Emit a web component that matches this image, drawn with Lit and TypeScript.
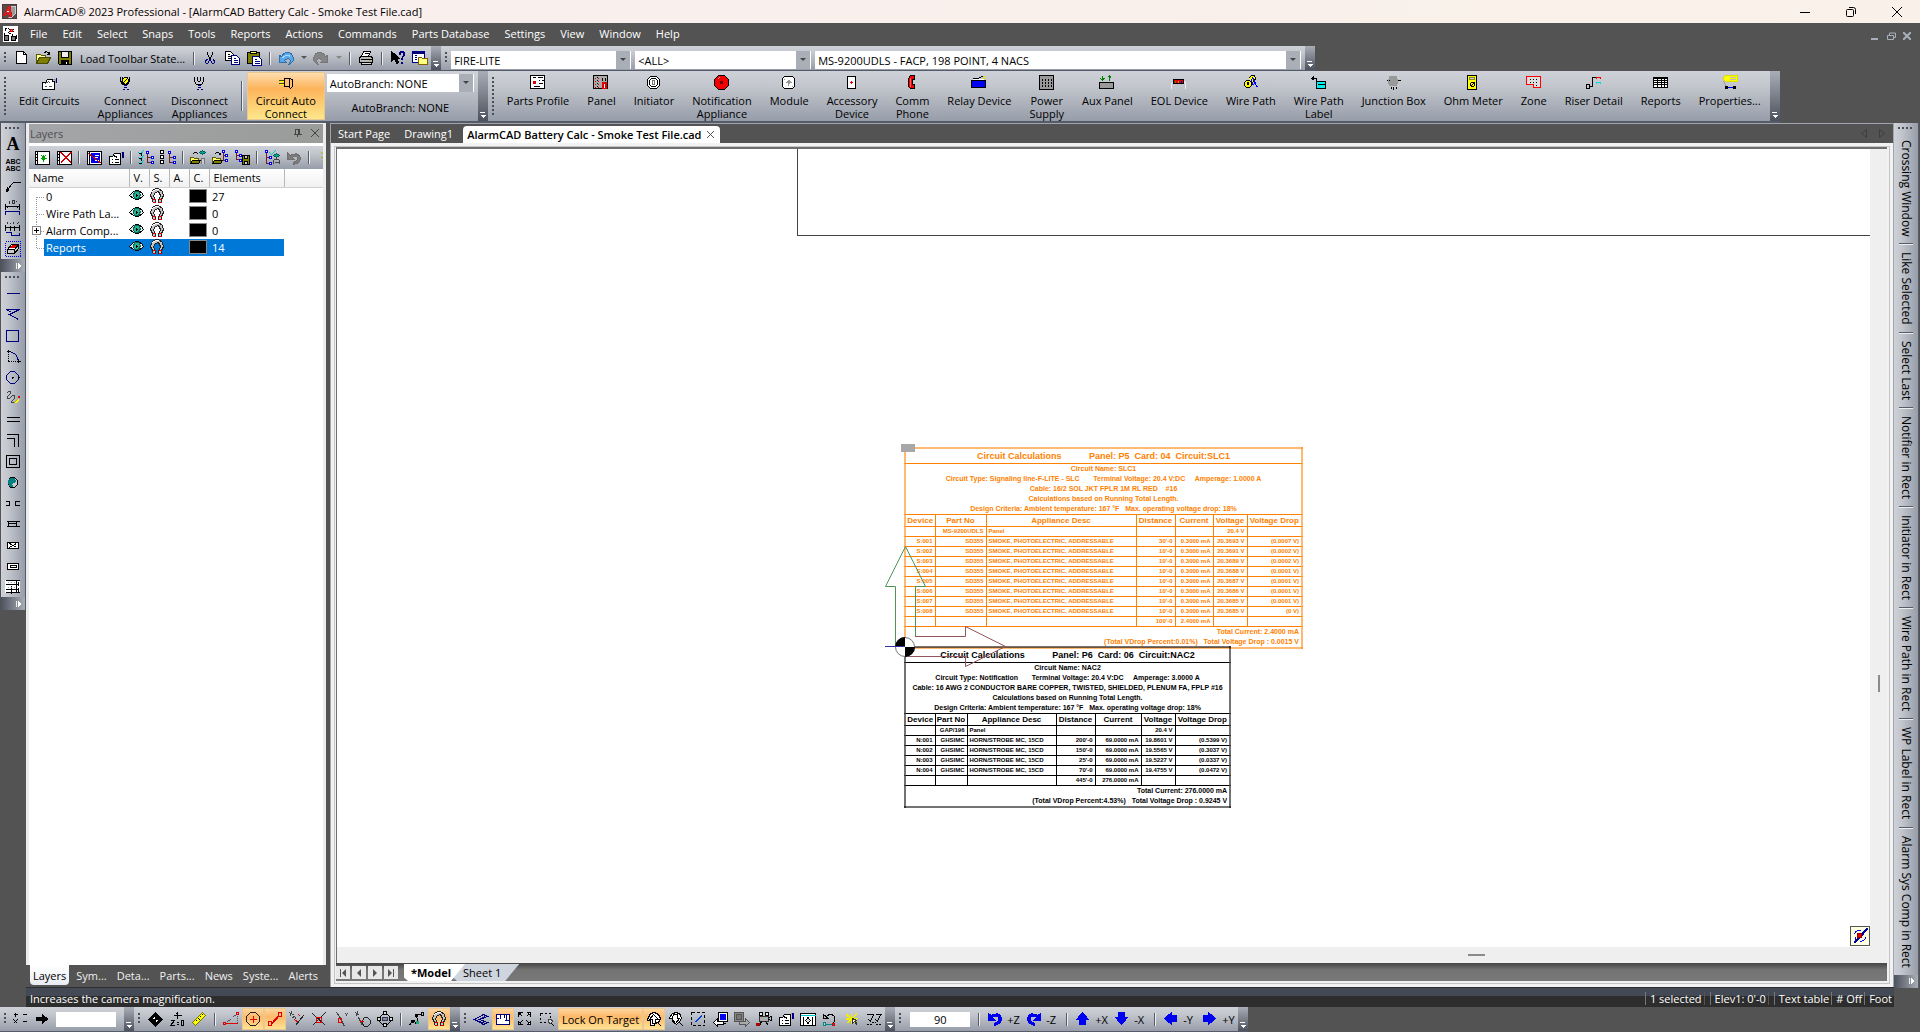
import { LitElement, html, css, svg, nothing } from "lit";
import { customElement, property } from "lit/decorators.js";
import { classMap } from "lit/directives/class-map.js";

type Shape = [d: string, stroke?: string, fill?: string, dash?: string];

const K = "#000";
const W = "#fff";
const N = "#00007f";
const B = "#0000f0";
const R = "#e00000";
const G = "#9a9a9a";
const Y = "#ffff00";

/* Icons on a 16 by 16 grid; whole numbers are pixel centres. */
const ICONS: Record<string, Shape[]> = {
  app: [["M0 0H14V14H0Z", "#4a3a3a", "#5a4a4a"], ["M8 2H13V9L9 13H6", "#ccc", "#999"], ["M1 11L6 2H8L9 12H7L6 9H4L3 11Z", "#d01818", "#e02020"], ["M4 7H6", W]],
  doc: [["M0 0H14V15H0Z", W, W], ["M1 2H3M2 1V4M5 2L11 6M11 2L5 6M1 6V8", K], ["M7 3H9V5H7Z", R, "#f66"], ["M1 9H5V14H1ZM8 10H12V14H8Z", K, "#777"], ["M5 7H7M9 7V9M13 8V12", K]],
  new: [["M3 1H10L13 4V13H3Z", K, W], ["M10 1V4H13", K]],
  open: [["M1 13V4H5L6 5H10V7", "#5a5a00", "#ffff9a"], ["M1 13L4 7H15L12 13Z", "#4a4a00", "#808000"], ["M9 2Q12 0 14 4M14 1V4H11", K]],
  save: [["M1 1H14V14H2L1 13Z", K, "#808000"], ["M4 1H11V7H4Z", K, "#eee"], ["M4 10H11V14H4Z", K, K], ["M9 11V13", W, W]],
  cut: [["M5 1V4L8 9M10 1V4L7 9", K], ["M5 9Q3 9 3 12Q4 14 6 12L7 9M10 9Q12 9 12 12Q11 14 9 12L8 9", N]],
  copy: [["M1 1H6L9 4V10H1Z", K, W], ["M3 4H5M3 6H7M3 8H6", K], ["M7 5H12L15 8V14H7Z", N, W], ["M9 8H11M9 10H13M9 12H13", N]],
  paste: [["M1 2H13V13H1Z", K, "#808000"], ["M4 3V1H10V3H4", K, "#ffff70"], ["M6 6H12L15 9V15H6Z", N, W], ["M8 9H10M8 11H13M8 13H13", N]],
  undo: [["M1 5V12H8L6 10Q9 7 11 9Q13 11 10 14Q15 12 15 8Q14 2 9 2Q5 2 3 6Z", "#2f6fae", "#5aa8e8"], ["M3 8Q8 3 12 6", "#a8d8ff"]],
  redo: [["M14 5V12H7L9 10Q6 7 4 9Q2 11 5 14Q0 12 0 8Q1 2 6 2Q10 2 12 6Z", "#777", "#858585"]],
  print: [["M5 1H12L10 6H3Z", K, W], ["M2 6H13L14 8V12H1V8Z", K, "#b8b8b8"], ["M3 12H13V14H3Z", K, "#ddd"], ["M2 9H13M6 3H10", K], ["M10 10H11", "#aa0", Y]],
  help: [["M1 1V11L4 8L6 13L8 12L6 8H9Z", K, K], ["M9 4V2L10 1H13L14 2V5L11 8V9M11 11V13", N], ["M10 4V2H13V5L12 7V9M12 11V13", N]],
  win: [["M0 1H12V12H0Z", N, W], ["M0 1H12V3H0Z", N, N], ["M2 5H4M2 7H4M2 9H4", N], ["M6 7H9L10 8H15V14H6Z", "#806000", "#ffff80"]],
  edit: [["M1 7H4L6 4H11V6H13V14H1Z", K, W], ["M4 8L7 6L9 8M3 11H5M7 11H10", "#555"], ["M11 4H14M14 3V7", G], ["M15 2V7", N, N]],
  connect: [["M3 1V5L5 9H10L12 5V1", K], ["M5 1V5M10 1V5", K], ["M5 4Q8 0 11 4Q12 7 8 9Q4 7 5 4Z", K, Y], ["M6 7L10 3", K], ["M6 10H9M6 12H9M5 14H7M9 14H11", N, N]],
  disconnect: [["M3 1V6L5 9H10L12 6V1", K], ["M6 1V5Q7 7 9 5V1", K], ["M6 10H9M6 12H9M5 14H7M9 14H11", N, N]],
  plug: [["M6 3H11L14 4V11L12 13L10 11H6Z", K, "#ffc070"], ["M11 3V11", K], ["M0 5H5M0 8H5", "#4a4a00"], ["M1 6H5M1 9H5", Y]],
  profile: [["M0 0H14V13H0Z", K, W], ["M2 2H5M7 2H12M8 5H9M11 5H13M8 8H12M3 11H9", K], ["M3 6H5V8H3Z", R, R]],
  panel: [["M0 0H14V13H0Z", K, "#aaa"], ["M2 2V12M5 2V12", R, "none", "1 2"], ["M3 2H4M3 5H4M3 8H4M3 11H4M9 2V5M12 2V5", K], ["M9 7H13V13H9Z", R, R], ["M11 8V12", W]],
  initiator: [["M4 1H10L13 4V10L10 13H4L1 10V4Z", K, W], ["M5 3H9L11 5V9L9 11H5L3 9V5Z", K], ["M6 5H8V9H6Z", "#777"], ["M7 7H7.5", R]],
  horn: [["M4 0H10L14 4V10L10 14H4L0 10V4Z", K, "#f00000"], ["M6 6H8V8H6Z", "#600", "#600"], ["M3 4L5 2", "#ff9090"]],
  module: [["M3 1H11L13 3V11L11 13H3L1 11V3Z", K, W], ["M6 5H8M5 6H9M5 7H9M6 8H8M7 4V10M4 7H10", "#999"], ["M3 4V3M11 10V11", G]],
  accessory: [["M3 1H11V13H3Z", K, W], ["M7 5V8M5 6.5H8.5", R]],
  phone: [["M6 0H10V4H8V9H10V13H6L4 11V3Z", K, "#f00000"], ["M6 2V11", "#ff6060"]],
  relay: [["M0 5H14V12H0Z", K, B], ["M1 3H7L10 1H12", K], ["M11 1H14M11 3H14", "#dd0"], ["M1 4H12", W]],
  power: [["M0 0H14V14H0Z", K, "#999"], ["M3 3V12M6 3V12M9 3V12M12 3V12", K, "none", "2 1"]],
  aux: [["M0 7H14V13H0Z", K, "#999"], ["M3 0V5M1 3L3 5L5 3M10 0V5M8 2L10 0L12 2M2 3H4M9 2H11", "#008000"], ["M3 9V9.5M5 9V9.5", "#0f0"], ["M12 11V11.5", R]],
  eol: [["M0 13V8L2 6H13L14 8V13", "#eee"], ["M2 4H12V8H2Z", K, R], ["M4 5V7", "#0a0"], ["M7 5V7", "#aa0"], ["M10 5V7", B]],
  wirepath: [["M5 3L8 0H11L12 3L10 7", K, Y], ["M8 4L9 9L12 8L13 11H14", B], ["M9 2L12 8M7 6L10 9", B], ["M3 5H6L8 7V10L6 12H3L1 10V7Z", K, Y], ["M4 7H5V9H4Z", K, W]],
  wplabel: [["M0 3L2 1V4ZM2 3H5V10", K], ["M5 6H14V13H5Z", K, "#00f0f0"], ["M6 9H14", K]],
  junction: [["M3 1H10V10H3Z", "#999", "#999"], ["M0 5H3M10 5H14M5 11V13M7 11V14M10 11V13", K], ["M2 3V8M11 3V8", "#999"]],
  ohm: [["M2 0H11V14H2Z", K, Y], ["M4 2H9V4H4Z", "#883", "#ccc"], ["M6 7H8L9 8V10L8 11H6L5 10V8ZM5 11L9 7M5 13H5.5M9 13H9.5", K]],
  zone: [["M0 1H14V12H7V9H0Z", "#f00", "#ddd"], ["M3 4H12M3 7H12M9 10H12", K, "none", "1 2"]],
  riser: [["M0 9H3V13H0ZM3 11H6V2H9", K], ["M9 2H14M10 1V3M14 1V3", "#f00"], ["M9 7H14M10 6V8M14 6V8", "#0dd"]],
  reports: [["M0 2H14V12H0Z", K, W], ["M0 3H14M0 5H14M0 7H14M0 9H14M4 3V12M8 3V12M11 3V12", K]],
  props: [["M3 0H15V6H3L1 4V2Z", "#dd0", Y], ["M7 2H13M7 4H13", "#bba"], ["M3 3V3.5", "#a00"], ["M1 6L4 11", G], ["M4 12H13", B], ["M3 11H5V13H3ZM11 11H13V13H11Z", K, K]],
  leader: [["M1 13L6 6L8 4H15", K], ["M1 13L2 9M1 13L4 12", K]],
  dim: [["M0 4V10M14 4V10M0 7H14M2 6V8M12 6V8", K], ["M4 1V4M7 1H9V4H7ZM11 1V2", "#333"], ["M0 15V12H14V15", N]],
  dims: [["M0 4V10M5 5V10M9 5V10M14 4V10M0 7H14", K], ["M2 1V3M4 3H5M8 1V3M11 3H12M13 1V2", "#333"], ["M0 12H6V15H14V12", N]],
  erase: [["M0 0H15V15H0Z", B, "none", "1 1"], ["M2 8L6 3H13L9 8Z", K, W], ["M5 6L7 4H11L9 6Z", R, R], ["M2 8H9V12H2ZM9 8L13 3V7L9 12", K, "#ccc"]],
  line: [["M1 8H14", N]],
  angle: [["M1 3H14L4 8L13 13", N], ["M1 3L6 6", N]],
  rect: [["M1 3H13V14H1Z", N]],
  arc: [["M3 3Q12 4 13 13", N], ["M3 3V13H13", K, "none", "1 1"], ["M1 3H4M3 1V4M2 13H4M13 11V14M12 13H15", K]],
  circle: [["M5 2H9L13 6V10L9 14H5L1 10V6Z", N], ["M6 8H8M7 7V9M12 8H14M13 7V9", K]],
  spline: [["M1 3L3 1H5V3L2 6V8H4L7 5H9V8L6 11V12H8", "#444"], ["M8 13L12 9", "#b0b000"], ["M9 13L13 9M10 13L13 10", Y], ["M13 6H14V7H13Z", R, R]],
  dbl: [["M1 6H14M1 10H14", K]],
  dblCorner: [["M1 2H13V14M1 6H9V14", K]],
  dblRect: [["M1 2H14V14H1ZM4 5H11V11H4Z", K]],
  ball: [["M5 3H9L12 6V10L9 13H5L3 10V6Z", K, "#ccc"], ["M5 4H9L10 7L6 9L7 12H5L3 9V6Z", "#008080", "#008080"]],
  gap: [["M0 6H4V10H0M14 6H10V10H14", K]],
  wall: [["M1 5H14M1 10H14M3 5V10M11 5V10M3 7H11", K, W]],
  boxX: [["M2 5H13V11H2Z", K, W], ["M4 6L11 10M11 6L4 10M7 8H8", K]],
  boxIn: [["M2 5H13V11H2Z", K, W], ["M5 7H11V9H5Z", K]],
  grid: [["M0 1H14V13H0Z", W, W], ["M0 1H14M0 5H12M0 10H12M6 6V14M11 1V12M13 2V6M13 8V12M0 13H14", K], ["M2 3H10M2 8H10", G, "none", "1 2"]],
  layNew: [["M1 1H15V14H1Z", K, W], ["M3 1V14M1 4H2M1 7H2M1 10H2", K], ["M9 4V11M6 7.5H12M7 5L11 10M11 5L7 10", "#00a000"]],
  layDel: [["M1 1H15V14H1Z", K, W], ["M3 1V14M1 4H2M1 7H2M1 10H2", K], ["M4 2L15 13M5 2L15 12M15 2L4 13M14 2L4 12", "#d00000"]],
  layEdit: [["M1 1H15V14H1Z", K, W], ["M3 1V14", K], ["M5 3H13V12H5Z", B, B], ["M8 5H12M8 7H11M8 10H12", W], ["M2 3L15 13", "#d00000"]],
  sheet: [["M1 6H4L6 3H12V14H1Z", K, W], ["M3 9H4M6 9H10M3 12H4M6 12H10M5 5L9 7", K], ["M12 2H14", G], ["M14 1V7M15 1V7", N]],
  checksTree: [["M0 2L2 4L5 0M0 7L2 9L5 5M0 12L2 14L5 10", "#00cccc"], ["M0 3H3V5M0 8H3V10M0 13H3", K], ["M9 3V12M9 7H13M9 12H13", "#702020"], ["M8 1H10V3H8ZM13 6H15V8H13ZM13 11H15V13H13Z", B, W]],
  boxesTree: [["M0 0H3V3H0ZM0 5H3V8H0ZM0 10H3V13H0Z", K, W], ["M9 3V12M9 7H13M9 12H13", "#702020"], ["M8 1H10V3H8ZM13 6H15V8H13ZM13 11H15V13H13Z", B, W]],
  openEye: [["M0 13V7H3L4 8H8V13Z", "#5a5a00", "#ff6"], ["M0 13L2 10H10L8 13Z", K, "#808000"], ["M2 4Q5 0 8 4", K], ["M9 2L12 0L15 2L12 4Z", "#055", "#0a9"], ["M11 13V8H14V13", "#777", "#ccc"]],
  openTree: [["M0 13V7H3L4 8H8V13Z", "#5a5a00", "#ff6"], ["M0 13L2 10H10L8 13Z", K, "#808000"], ["M2 4Q5 0 8 4V2M8 4H6", K], ["M11 1V10H14M11 5H14", "#702020"], ["M10 0H12V2H10ZM13 4H15V6H13ZM13 9H15V11H13Z", B, W]],
  treeSave: [["M2 1V9H5M2 5H5", "#702020"], ["M1 0H3V2H1ZM5 4H7V6H5ZM5 9H7V11H5Z", B, W], ["M8 5H15V14H8Z", K, "#808000"], ["M10 5H13V8H10ZM10 11H13V14H10Z", K, "#ccc"]],
  treeEye: [["M2 1V13H5M2 7H5", "#702020"], ["M1 0H3V2H1ZM5 6H7V8H5ZM5 12H7V14H5Z", B, W], ["M5 2L7 4L11 0", "#0cc"], ["M9 5L12 3L15 5L12 7Z", "#055", "#0a9"], ["M9 13V10Q12 7 15 10V13M10 12H14", "#444"]],
  back: [["M1 2V9H8L6 7Q9 4 11 7Q12 10 7 12V14Q14 13 14 7Q11 1 4 5Z", "#707070", "#7c7c7c"]],
  sun: [["M8 5H13V10H8ZM4 7H6M5 2L7 4M5 12L7 10", "#aa0", Y]],
  eye: [["M0 7Q4 2 8 2Q12 3 14 7Q10 11 7 11Q3 10 0 7Z", K, "#e8e8e8"], ["M5 3H9L11 6L9 10H5L4 7Z", "#006b5b", "#30b090"], ["M7 5V8M6 6.5H8.5", K]],
  magnet: [["M3 13V11L1 7L3 2L7 0H9L13 3L14 7L12 11V14H9V11L11 8L10 4L8 3L5 5L4 8L6 11V14H3", "#222", "#c4c4c4"], ["M3 3L6 1H9", W], ["M3 11H6M9 11H12M3 14H6M9 14H12", R]],
  calc: [["M0 3H4M2 1V5M9 3H13M0 8L4 12M4 8L0 12M9 10H13M11 8V8.5M11 12V12.5", K]],
  arrowR: [["M1 6H7V3L12 7.5L7 12V9H1Z", K, K]],
  datum: [["M8 1L15 8L8 15L1 8Z", K, K], ["M5 8L8 5V8ZM8 8H11L8 11Z", W, W], ["M8 0V15M0 8H15", K]],
  zzero: [["M8 0V7M4 4H12M7 2L10 5", K], ["M1 9H5L1 14H5M7 11H9M7 13H9M12 9H14V14H12Z", K]],
  ruler: [["M1 11L11 1L14 4L4 14Z", "#777700", Y], ["M5 9L6 10M7 7L9 9M9 5L10 6M11 3L12 4", K]],
  snapAng: [["M2 12L14 2V12", "#555", "none", "1 1"], ["M1 12H14", R], ["M0 11H2V13H0ZM13 1H15V3H13Z", R, "none"]],
  snapCen: [["M5 1H10L14 5V10L10 14H5L1 10V5Z", "#222"], ["M4 7.5H11M7.5 4V11", "#e00"]],
  snapEnd: [["M4 12L12 3M4 13L13 3", R], ["M1 10H4V14H1ZM11 1H14V5H11Z", R, "#fdc080"]],
  snapPar: [["M0 1L5 4M2 0L1 5M3 6L5 5L7 8", "#444"], ["M6 14L14 4", "#222"], ["M5 8L9 11M9 3L11 5", R]],
  snapInt: [["M1 2L14 14M14 1L1 14", "#222"], ["M5 6H10V11H5Z", R]],
  snapNear: [["M3 1L6 5L11 15", "#444"], ["M5 7H8V11H5Z", R], ["M12 2L14 5M14 2L12 5", "#444"]],
  snapTan: [["M0 1L4 4M2 0L1 5M3 6L7 14", "#444"], ["M9 6H12L15 9V12L12 15H9L7 12V9Z", "#222"], ["M5 8V10H8", R]],
  snapQuad: [["M5 3H10L13 6V10L10 13H5L2 10V6Z", K], ["M6 0H9V3H6ZM6 12H9V15H6ZM0 6H3V9H0ZM12 6H15V9H12Z", K, "#ddd"], ["M5 6H10V9H5Z", "#335", "#889"]],
  polysnap: [["M0 14L3 9H5L6 12L8 9L7 4L9 3H12", K], ["M2 9H4V11H2ZM6 3H8V5H6Z", K, K], ["M12 1H14V4H12Z", K, "#bbb"], ["M7 10H9V12H7Z", "#2a7", "#2a7"]],
  iso: [["M1 8L10 3L14 5L6 8L14 11L10 13Z", N], ["M5 8L12 5M3 9L12 12", N]],
  plan: [["M1 3H14V13H1Z", N, W], ["M5 3V7M1 7H3M9 3V6M9 9H14M11 3V9", N]],
  fit: [["M5 1H1V5M5 5L2 2M9 1H13V5M9 5L12 2M1 9V13H5M5 9L2 12M13 9V13H9M9 9L12 12", K], ["M3 1V3H1M11 1V3H13M1 11H3V13M13 11H11V13", K, W]],
  zoomWin: [["M1 2H11V11H1Z", K, "none", "2 2"], ["M9 8H12L13 10L11 12L9 11Z", "#444", "#ddd"], ["M12 12L15 15", K]],
  zoomIn: [["M1 8L4 2L8 1L12 3L14 7L12 11L8 12V14H4V9H1Z", K, W], ["M3 8L7 3L12 8H9V12H6V8Z", K, W], ["M11 11L15 15", K]],
  zoomOut: [["M1 6L4 2L8 1L12 3L13 7L11 10L8 13L4 10V7H1Z", K, W], ["M4 7L5 3H9V7H11L7 12L3 7Z", K, W], ["M11 11L15 15", K]],
  clip: [["M1 1H14V14H1Z", K, "none", "3 2"], ["M4 11L11 4M5 11L11 5", "#0040e0"]],
  prev: [["M6 1H15V10H6Z", K, W], ["M8 3H13V8H8Z", B, B], ["M8 12H13", K], ["M1 11L5 7V10H11V13H5V15Z", K, W]],
  next: [["M0 1H9V10H0Z", "#555", "#888"], ["M2 3H7V8H2Z", "#555", "#777"], ["M15 11L11 7V10H5V13H11V15Z", "#555", "#aaa"]],
  camera: [["M3 1H6V4H3ZM9 1H12V4H9Z", K, "#eee"], ["M3 5H12V10H3Z", "#333", "#aaa"], ["M12 6L15 5V9L12 8M5 10L3 14M9 10L12 14", K], ["M0 12H3V14H0Z", "#a00", "#a00"]],
  viewBox: [["M0 2H15V14H0Z", K, W], ["M0 4H15", "#0cc"], ["M3 5V14M12 5V14M5 9L7.5 6L10 9L7.5 12Z", K, "#ddd"]],
  rotate: [["M3 6Q7 1 11 4Q14 8 11 11L9 13M1 3V7H6Z", K], ["M1 13H11", "#088"], ["M1 11H3V14H1Z", "#088", "#ccc"], ["M10 12H12V14H10Z", R]],
  flash: [["M1 7H13M1 8H12M2 3L12 11M12 2L2 12M7 2V12M2 4L12 10M3 3L11 12M12 3L3 12", "#f0f000"], ["M8 7V12L10 10L12 13L11 9H12Z", "#333", W]],
  norms: [["M0 3H6M9 3H15M2 8L4 10L7 3M9 8L11 10L14 3", K], ["M0 13H5M9 13H14M5 11H9", K, "none", "2 1"]],
  rotL: [["M1 2V9H8L5 6Q9 3 11 6Q12 10 7 12V14Q15 12 14 6Q11 0 4 4Z", B, B]],
  rotR: [["M14 2V9H7L10 6Q6 3 4 6Q3 10 8 12V14Q0 12 1 6Q4 0 11 4Z", B, B]],
  up: [["M7 1L13 8H10V13H4V8H1Z", B, B]],
  down: [["M7 13L13 6H10V1H4V6H1Z", B, B]],
  left: [["M1 7L8 1V4H13V10H8V13Z", B, B]],
  right: [["M13 7L6 1V4H1V10H6V13Z", B, B]],
  compass: [["M2 6Q3 1 9 2M4 13Q2 11 3 9M13 9Q12 13 7 13", B], ["M1 15L15 0M2 15L15 1M1 14L14 0", "#0000a0"], ["M5 5H9V9H5Z", "#900", R]],
};

const icon = (name: string, size = 16) => html`<svg
  width=${size}
  height=${size}
  viewBox="0 0 16 16"
  shape-rendering="crispEdges"
  aria-hidden="true"
>
  <g transform="translate(.5 .5)">
    ${ICONS[name].map(
      ([d, stroke = K, fill = "none", dash]) =>
        svg`<path d=${d} stroke=${stroke} fill=${fill} stroke-dasharray=${dash ?? nothing} />`,
    )}
  </g>
</svg>`;

const base = css`
  * {
    box-sizing: border-box;
  }
  svg {
    display: block;
    flex: none;
  }
  button,
  input,
  select {
    font: inherit;
    color: inherit;
    margin: 0;
    padding: 0;
    border: 0;
    border-radius: 0;
    background: none;
  }
  a {
    color: inherit;
    text-decoration: none;
  }
`;

/* A docked toolbar: grip, items, overflow chevron. */
@customElement("tool-bar")
export class ToolBar extends LitElement {
  @property({ type: Boolean, reflect: true }) vertical = false;
  @property({ type: Boolean, reflect: true }) tall = false;

  static styles = [
    base,
    css`
      :host {
        display: flex;
        flex: none;
        height: 25px;
        background: linear-gradient(#ced1d7, #c3c6cd 30%, #969da9);
        border-bottom: 1px solid #555b68;
      }
      :host([tall]) {
        height: 52px;
        border-bottom-width: 2px;
      }
      :host([vertical]) {
        flex-direction: column;
        width: 25px;
        height: auto;
        background: linear-gradient(90deg, #ced1d7, #c3c6cd 30%, #969da9);
        border-bottom: 0;
        border-right: 1px solid #555b68;
      }
      .grip {
        flex: none;
        width: 2px;
        margin: 6px 4px;
        background: repeating-linear-gradient(#4a4e57 0 2px, transparent 2px 4px);
      }
      :host([vertical]) .grip {
        width: 16px;
        height: 2px;
        margin: 4px 4px;
        background: repeating-linear-gradient(90deg, #4a4e57 0 2px, transparent 2px 4px);
      }
      .items {
        display: flex;
        align-items: center;
        flex: 1;
      }
      :host([vertical]) .items {
        flex-direction: column;
      }
      .more {
        flex: none;
        display: flex;
        align-items: flex-end;
        justify-content: center;
        width: 10px;
        padding: 0 0 2px;
        background: linear-gradient(#a9adb6, #4c525e);
      }
      :host([vertical]) .more {
        width: auto;
        height: 13px;
        align-items: center;
        justify-content: flex-end;
        padding: 0 2px 0 0;
        background: linear-gradient(90deg, #4c525e, #a9adb6);
      }
    `,
  ];

  render() {
    return html`
      <span class="grip"></span>
      <div class="items" role="toolbar"><slot></slot></div>
      <button class="more" aria-label="Toolbar options">
        ${this.vertical
          ? html`<svg width="8" height="8" viewBox="0 0 8 8" shape-rendering="crispEdges"><path d="M1 1V7" stroke="#eee" /><path d="M3 1L7 4L3 7Z" fill="#fff" /></svg>`
          : html`<svg width="8" height="8" viewBox="0 0 8 8" shape-rendering="crispEdges"><path d="M1 1.5H6" stroke="#fff" /><path d="M2 4H7L4 7Z" fill="#fff" /></svg>`}
      </button>
    `;
  }
}

interface LayerRow {
  name: string;
  count: number;
  expandable?: boolean;
  selected?: boolean;
}

const LAYERS: LayerRow[] = [
  { name: "0", count: 27 },
  { name: "Wire Path La...", count: 0 },
  { name: "Alarm Comp...", count: 0, expandable: true },
  { name: "Reports", count: 14, selected: true },
];

@customElement("layers-panel")
export class LayersPanel extends LitElement {
  static styles = [
    base,
    css`
      :host {
        display: flex;
        flex-direction: column;
        width: 300px;
        flex: none;
        color: #000;
      }
      .box {
        display: flex;
        flex-direction: column;
        flex: 1;
        border: solid #ececec;
        border-width: 1px 3px 0 3px;
        background: #fff;
      }
      header {
        display: flex;
        align-items: center;
        height: 19px;
        padding: 0 0 1px 1px;
        background: linear-gradient(90deg, #a3a5a8, #9a9c9a);
        color: #505050;
      }
      header span {
        flex: 1;
      }
      header button {
        width: 17px;
        height: 16px;
        display: grid;
        place-items: center;
      }
      .tools {
        display: flex;
        align-items: center;
        overflow: hidden;
        height: 23px;
        margin-top: 3px;
        padding-left: 2px;
        background: linear-gradient(#ced1d7, #c3c6cd 30%, #969da9);
      }
      .tools button {
        flex: none;
        width: 22px;
        height: 22px;
        display: grid;
        place-items: center;
      }
      .sep {
        flex: none;
        width: 2px;
        height: 13px;
        margin: 0 3px;
        background: linear-gradient(90deg, #555b68 50%, #eee 50%);
      }
      table {
        border-collapse: collapse;
        table-layout: fixed;
        width: 100%;
      }
      th {
        height: 18px;
        padding: 0 4px;
        font-weight: 400;
        text-align: left;
        background: linear-gradient(#fff, #f0f0f0);
        border-right: 1px solid #b8b8b8;
        border-bottom: 1px solid #d0d0d0;
      }
      th:last-child {
        border-right: 0;
      }
      td {
        height: 17px;
        padding: 0;
        line-height: 17px;
        overflow: hidden;
        white-space: nowrap;
      }
      .name {
        display: flex;
      }
      .tree {
        width: 15px;
        height: 17px;
      }
      .label {
        flex: 1;
        padding-left: 2px;
      }
      .sel {
        color: #fff;
      }
      .sel .label,
      .sel td + td:not(:last-child) {
        background: #0078d7;
      }
      .swatch {
        display: block;
        width: 18px;
        height: 14px;
        background: #000;
        border: 1px solid #888;
      }
      .count {
        padding-left: 3px;
      }
      nav {
        display: flex;
        height: 22px;
        flex: none;
        color: #f0f0f0;
        padding-left: 4px;
      }
      nav a {
        height: 20px;
        padding: 0 5px;
        line-height: 22px;
      }
      nav a.on {
        padding: 0 3px;
        margin-right: 2px;
        color: #000;
        background: linear-gradient(#fff, #e8ecf2);
        border-radius: 0 0 4px 4px;
      }
    `,
  ];

  render() {
    const tool = (name: string) => html`<button aria-label=${name}>${icon(name)}</button>`;
    const sep = html`<span class="sep"></span>`;
    return html`
      <section class="box">
        <header>
          <span>Layers</span>
          <button aria-label="Auto hide">
            <svg width="8" height="8" viewBox="0 0 8 8" shape-rendering="crispEdges"><path d="M1.5 5V.5H5.5V5M0 5.5H8M4.5 1V5M3.5 6V8" fill="none" stroke="#444" /></svg>
          </button>
          <button aria-label="Close">
            <svg width="8" height="8" viewBox="0 0 8 8"><path d="M0 0L8 8M8 0L0 8" stroke="#444" /></svg>
          </button>
        </header>
        <div class="tools" role="toolbar">
          ${tool("layNew")}${tool("layDel")}${sep}${tool("layEdit")}${tool("sheet")}${sep}
          ${tool("checksTree")}${tool("boxesTree")}${sep}
          ${tool("openEye")}${tool("openTree")}${tool("treeSave")}${sep}
          ${tool("treeEye")}${tool("back")}${sep}${tool("sun")}
        </div>
        <table>
          <colgroup>
            <col style="width:100px" />
            <col style="width:20px" />
            <col style="width:20px" />
            <col style="width:20px" />
            <col style="width:20px" />
            <col style="width:75px" />
            <col />
          </colgroup>
          <thead>
            <tr>
              ${["Name", "V.", "S.", "A.", "C.", "Elements", ""].map((h) => html`<th scope="col">${h}</th>`)}
            </tr>
          </thead>
          <tbody>
            ${LAYERS.map(
              (r, i) => html`<tr class=${classMap({ sel: !!r.selected })}>
                <td>
                  <div class="name">
                    <svg class="tree" width="15" height="17" shape-rendering="crispEdges">
                      <path d="M7.5 ${i === 0 ? 9 : 0}V${i === LAYERS.length - 1 ? 9 : 17}M8 9.5H15" stroke="#999" stroke-dasharray="1 1" />
                      ${r.expandable
                        ? svg`<path d="M3.5 4.5H11.5V12.5H3.5Z" fill="#fff" stroke="#888" /><path d="M5 8.5H10M7.5 6V11" stroke="#000" />`
                        : nothing}
                    </svg>
                    <span class="label">${r.name}</span>
                  </div>
                </td>
                <td>${icon("eye")}</td>
                <td>${icon("magnet")}</td>
                <td></td>
                <td><span class="swatch"></span></td>
                <td class="count">${r.count}</td>
                <td></td>
              </tr>`,
            )}
          </tbody>
        </table>
      </section>
      <nav>
        ${["Layers", "Sym...", "Deta...", "Parts...", "News", "Syste...", "Alerts"].map(
          (t, i) => html`<a href="#" class=${classMap({ on: i === 0 })}>${t}</a>`,
        )}
      </nav>
    `;
  }
}

interface Report {
  title: string;
  info: string[];
  widths: number[];
  rows: string[][];
  totals: string[];
}

const smoke = (n: number, dist: string, volt: string, drop: string) => [
  `S:00${n}`,
  "SD355",
  "SMOKE, PHOTOELECTRIC, ADDRESSABLE",
  dist,
  "0.3000 mA",
  volt,
  drop,
];
const strobe = (n: number, dist: string, volt: string, drop: string) => [
  `N:00${n}`,
  "GHSIMC",
  "HORN/STROBE MC, 15CD",
  dist,
  "69.0000 mA",
  volt,
  drop,
];

const SLC: Report = {
  title: "Circuit Calculations           Panel: P5  Card: 04  Circuit:SLC1",
  info: [
    "Circuit Name: SLC1",
    "Circuit Type: Signaling line-F-LITE - SLC       Terminal Voltage: 20.4 V:DC     Amperage: 1.0000 A",
    "Cable: 16/2 SOL JKT FPLR 1M RL RED    #16",
    "Calculations based on Running Total Length.",
    "Design Criteria: Ambient temperature: 167 °F   Max. operating voltage drop: 18%",
  ],
  widths: [30, 51, 150, 39, 38, 34, 55],
  rows: [
    ["", "MS-9200UDLS", "Panel", "", "", "20.4 V", ""],
    smoke(1, "30'-0", "20.3693 V", "(0.0007 V)"),
    smoke(2, "10'-0", "20.3691 V", "(0.0002 V)"),
    smoke(3, "10'-0", "20.3689 V", "(0.0002 V)"),
    smoke(4, "10'-0", "20.3688 V", "(0.0001 V)"),
    smoke(5, "10'-0", "20.3687 V", "(0.0001 V)"),
    smoke(6, "10'-0", "20.3686 V", "(0.0001 V)"),
    smoke(7, "10'-0", "20.3685 V", "(0.0001 V)"),
    smoke(8, "10'-0", "20.3685 V", "(0 V)"),
    ["", "", "", "100'-0", "2.4000 mA", "", ""],
  ],
  totals: ["Total Current: 2.4000 mA", "(Total VDrop Percent:0.01%)   Total Voltage Drop : 0.0015 V"],
};

const NAC: Report = {
  title: "Circuit Calculations           Panel: P6  Card: 06  Circuit:NAC2",
  info: [
    "Circuit Name: NAC2",
    "Circuit Type: Notification       Terminal Voltage: 20.4 V:DC     Amperage: 3.0000 A",
    "Cable: 16 AWG 2 CONDUCTOR BARE COPPER, TWISTED, SHIELDED, PLENUM FA, FPLP #16",
    "Calculations based on Running Total Length.",
    "Design Criteria: Ambient temperature: 167 °F   Max. operating voltage drop: 18%",
  ],
  widths: [30, 32, 89, 39, 46, 34, 55],
  rows: [
    ["", "GAP/196", "Panel", "", "", "20.4 V", ""],
    strobe(1, "200'-0", "19.8601 V", "(0.5399 V)"),
    strobe(2, "150'-0", "19.5565 V", "(0.3037 V)"),
    strobe(3, "25'-0", "19.5227 V", "(0.0337 V)"),
    strobe(4, "70'-0", "19.4755 V", "(0.0472 V)"),
    ["", "", "", "445'-0", "276.0000 mA", "", ""],
  ],
  totals: ["Total Current: 276.0000 mA", "(Total VDrop Percent:4.53%)   Total Voltage Drop : 0.9245 V"],
};

@customElement("circuit-report")
export class CircuitReport extends LitElement {
  @property({ attribute: false }) report: Report = SLC;

  static styles = css`
    :host {
      display: block;
      font: 700 6px/9px "Liberation Sans", sans-serif;
    }
    table {
      border-collapse: collapse;
      table-layout: fixed;
      border: 2px solid color-mix(in srgb, currentColor 55%, transparent);
    }
    td,
    th {
      border: 1px solid;
      height: 10px;
      padding: 0 2px;
      box-sizing: border-box;
      overflow: hidden;
      white-space: pre;
      text-align: right;
    }
    th {
      font-size: 8px;
      height: 12px;
      padding: 0;
      text-align: center;
    }
    .title {
      font-size: 9px;
      height: 15px;
      padding-top: 2px;
    }
    .info {
      height: 51px;
      line-height: 10px;
      font-size: 7px;
      text-align: center;
    }
    .total {
      height: 20px;
      line-height: 10px;
      font-size: 7px;
    }
    td:nth-child(3) {
      text-align: left;
    }
  `;

  render() {
    const r = this.report;
    const heads = ["Device", "Part No", "Appliance Desc", "Distance", "Current", "Voltage", "Voltage Drop"];
    return html`<table style="width:${r.widths.reduce((a, b) => a + b, 0)}px">
      <colgroup>
        ${r.widths.map((w) => html`<col style="width:${w}px" />`)}
      </colgroup>
      <thead>
        <tr><th class="title" colspan="7">${r.title}</th></tr>
        <tr><td class="info" colspan="7">${r.info.join("\n")}</td></tr>
        <tr>${heads.map((h) => html`<th scope="col">${h}</th>`)}</tr>
      </thead>
      <tbody>
        ${r.rows.map((row) => html`<tr>${row.map((c) => html`<td>${c}</td>`)}</tr>`)}
        <tr><td class="total" colspan="7">${r.totals.join("\n")}</td></tr>
      </tbody>
    </table>`;
  }
}

@customElement("app-root")
export class AppRoot extends LitElement {
  static styles = [
    base,
    css`
      :host {
        display: block;
        font: 11px/13px "Open Sans", "Noto Sans", sans-serif;
        color: #000;
      }
      .app {
        display: flex;
        flex-direction: column;
        height: 100vh;
        overflow: hidden;
        background: #535353;
      }
      .titlebar {
        flex: none;
        display: flex;
        align-items: center;
        gap: 6px;
        height: 23px;
        padding-left: 2px;
        background: linear-gradient(90deg, #f9eeee, #f9f1e9);
      }
      .titlebar h1 {
        flex: 1;
        margin: 0;
        font-size: 11px;
        font-weight: 400;
      }
      .titlebar button {
        width: 46px;
        height: 22px;
        display: grid;
        place-items: center;
      }
      .menubar {
        flex: none;
        display: flex;
        align-items: center;
        height: 23px;
        padding: 0 5px 2px 3px;
        color: #fff;
      }
      .menubar nav {
        flex: 1;
        display: flex;
        gap: 1px;
        margin-left: 4px;
      }
      .menubar nav a {
        padding: 0 7px;
      }
      .menubar button {
        width: 16px;
        height: 16px;
        margin-top: 4px;
        display: grid;
        place-items: center;
      }
      .row {
        display: flex;
        flex: none;
      }
      .ib {
        flex: none;
        width: 22px;
        height: 22px;
        display: grid;
        place-items: center;
      }
      .vb {
        width: 24px;
        height: 21px;
      }
      .abc {
        font: 700 7px/7px "Liberation Sans", sans-serif;
        width: 18px;
      }
      .big {
        font: 700 18px/20px "Liberation Serif", serif;
      }
      .tb {
        height: 22px;
        padding: 0 4px;
        white-space: nowrap;
      }
      .on {
        background: linear-gradient(#fdd9a5, #fdb968 40%, #fee596);
        box-shadow: inset 0 0 0 1px #e8c890;
      }
      .axis {
        display: flex;
        align-items: center;
        gap: 4px;
        width: 39px;
        height: 22px;
        padding-left: 3px;
      }
      .drop {
        width: 13px;
        height: 22px;
        display: grid;
        place-items: center;
      }
      .sep {
        flex: none;
        width: 2px;
        height: 13px;
        margin: 0 4px;
        background: linear-gradient(90deg, #555b68 50%, #eee 50%);
      }
      .sep.tall {
        height: 30px;
      }
      .cmd {
        flex: none;
        display: flex;
        flex-direction: column;
        align-items: center;
        height: 48px;
        padding: 3px 9px 0;
        gap: 3px;
      }
      .cmd.on {
        background: linear-gradient(#fde0b4, #fdb45a 35%, #fee88c);
      }
      .combo {
        display: grid;
        background: #fff;
        height: 18px;
        margin-top: 4px;
      }
      .combo select {
        grid-area: 1 / 1;
        appearance: none;
        width: 100%;
        padding-left: 3px;
        outline: none;
      }
      .combo svg {
        grid-area: 1 / 1;
        justify-self: end;
        margin-right: 1px;
        pointer-events: none;
      }
      .maker {
        width: 180px;
        margin-left: 0;
      }
      .kind {
        width: 176px;
        margin-left: 4px;
      }
      .part {
        width: 486px;
        margin-left: 4px;
        margin-right: 4px;
      }
      .branch {
        display: flex;
        flex-direction: column;
        width: 147px;
        margin: 0 4px 0 2px;
        height: 50px;
        gap: 9px;
      }
      .branch .combo {
        margin-top: 3px;
      }
      .branch output {
        text-align: center;
      }
      .main {
        flex: 1;
        display: flex;
        min-height: 0;
      }
      .left {
        width: 26px;
        padding-left: 1px;
        flex: none;
      }
      .center {
        flex: 1;
        display: flex;
        flex-direction: column;
        min-width: 0;
      }
      .work {
        flex: 1;
        display: flex;
        gap: 4px;
        min-height: 0;
      }
      .docs {
        flex: 1;
        display: flex;
        flex-direction: column;
        min-width: 0;
        border: 1px solid #a0a4ac;
        border-bottom: 0;
      }
      .doctabs {
        flex: none;
        display: flex;
        align-items: center;
        height: 19px;
        padding-left: 7px;
        color: #fff;
      }
      .doctabs > a {
        margin-right: 14px;
      }
      .doctabs > span {
        display: flex;
        align-items: center;
        gap: 6px;
        height: 17px;
        margin-top: 2px;
        margin-left: -4px;
        padding: 0 6px 0 4px;
        color: #000;
        font-weight: 600;
        background: #fff;
        border-radius: 4px 4px 0 0;
      }
      .doctabs > div {
        margin-left: auto;
        display: flex;
        gap: 12px;
        padding-right: 8px;
      }
      .frame {
        flex: 1;
        display: flex;
        flex-direction: column;
        min-height: 0;
        border: solid #f2f2f2;
        border-width: 4px 6px 6px 5px;
        outline: 1px solid #c4c4c4;
        outline-offset: -4px;
      }
      .view {
        flex: 1;
        display: grid;
        grid-template: minmax(0, 1fr) 16px / minmax(0, 1fr) 17px;
        min-height: 0;
        background: #efefef;
        border: solid #6f6f6f;
        border-width: 2px 0 0 1px;
      }
      .canvas {
        position: relative;
        overflow: hidden;
        background: #fff;
      }
      .canvas > * {
        position: absolute;
      }
      .sheetframe {
        left: 460px;
        right: 0;
        top: 0;
        height: 87px;
        border: solid #444;
        border-width: 0 0 1px 1px;
      }
      .slc {
        left: 567px;
        top: 298px;
        color: #ff7f00;
      }
      .nac {
        left: 567px;
        top: 497px;
        color: #000;
      }
      .handle {
        left: 564px;
        top: 295px;
        width: 14px;
        height: 8px;
        background: #a8a8a8;
      }
      .ucs {
        left: 546px;
        top: 397px;
      }
      .badge {
        right: 0;
        bottom: 1px;
        width: 20px;
        height: 20px;
        display: grid;
        place-items: center;
        background: #ffffe1;
        border: 1px solid #555;
      }
      .vthumb {
        width: 2px;
        height: 17px;
        margin: 526px 0 0 8px;
        background: #8a8a8a;
      }
      .hthumb {
        width: 17px;
        height: 2px;
        margin: 7px 0 0 1131px;
        background: #8a8a8a;
      }
      .sheets {
        flex: none;
        display: flex;
        align-items: center;
        height: 18px;
        background: linear-gradient(#4a4a4a, #747474 35%, #787878);
        border-top: 1px solid #4a4a4a;
      }
      .sheets button {
        width: 14px;
        height: 13px;
        margin-right: 2px;
        display: grid;
        place-items: center;
        background: #e8e8e8;
      }
      .sheets a {
        height: 17px;
        line-height: 18px;
        padding: 0 18px 0 10px;
        clip-path: polygon(0 0, 100% 0, calc(100% - 14px) 100%, 4px 100%, 0 80%);
        background: #cfd5de;
        margin-left: -12px;
      }
      .sheets a.cur {
        padding: 0 14px 0 7px;
        margin-left: 4px;
        font-weight: 700;
        background: #fff;
        z-index: 1;
      }
      .status {
        flex: none;
        display: flex;
        align-items: center;
        height: 20px;
        padding: 2px 0 0 4px;
        color: #fff;
        border-top: 1px solid #2e2e30;
        background: linear-gradient(#434955 0 8px, #2d2d2d 8px);
      }
      .status span:first-child {
        flex: 1;
      }
      .status span + span {
        padding: 0 2px 0 4px;
        border-left: 1px solid #777;
      }
      .status .gap {
        margin-right: 5px;
        border-right: 1px solid #555;
      }
      .right {
        width: 26px;
        flex: none;
      }
      .right button {
        writing-mode: vertical-rl;
        font-size: 12px;
        line-height: 16px;
        padding: 7px 0;
        white-space: nowrap;
      }
      .right i {
        width: 14px;
        height: 2px;
        background: linear-gradient(#555b68 50%, #eee 50%);
      }
      .num {
        width: 60px;
        height: 15px;
        margin: 0 8px 0 2px;
        background: #fff;
        text-align: center;
      }
      .num.turn {
        margin: 0 4px 0 5px;
      }
    `,
  ];

  private ib(name: string, on = false) {
    return html`<button class=${classMap({ ib: true, on })} aria-label=${name}>${icon(name)}</button>`;
  }

  private vb(name: string) {
    return html`<button class="ib vb" aria-label=${name}>${icon(name)}</button>`;
  }

  private combo(cls: string, label: string, value: string) {
    return html`<div class="combo ${cls}">
      <select aria-label=${label}><option>${value}</option></select>
      <svg width="14" height="18" viewBox="0 0 14 18"><rect width="14" height="18" fill="#a9aeb7" /><path d="M4 7H10L7 10Z" fill="#444" /></svg>
    </div>`;
  }

  private cmd(name: string, first: string, second = "", on = false) {
    return html`<button class=${classMap({ cmd: true, on })}>
      ${icon(name)}<span>${first}${second ? html`<br />${second}` : nothing}</span>
    </button>`;
  }

  private axis(name: string, text: string) {
    return html`<button class="axis">${icon(name)}${text}</button>`;
  }

  render() {
    const sep = html`<span class="sep"></span>`;
    const drop = (c: string) =>
      html`<button class="drop" aria-label="History"><svg width="6" height="4"><path d="M0 0H6L3 3Z" fill=${c} /></svg></button>`;
    return html`
      <div class="app">
        <header class="titlebar">
          ${icon("app")}
          <h1>AlarmCAD® 2023 Professional - [AlarmCAD Battery Calc - Smoke Test File.cad]</h1>
          <div class="row">
            <button aria-label="Minimize"><svg width="10" height="10"><path d="M0 5.5H10" stroke="#000" /></svg></button>
            <button aria-label="Restore"><svg width="10" height="10" fill="none" stroke="#000"><rect x=".5" y="2.5" width="7" height="7" rx="1" /><path d="M3 .5H7.5Q9.500 .5 9.500 2.500V7" /></svg></button>
            <button aria-label="Close"><svg width="10" height="10"><path d="M0 0L10 10M10 0L0 10" stroke="#000" /></svg></button>
          </div>
        </header>
        <div class="menubar">
          ${icon("doc")}
          <nav>
            ${["File", "Edit", "Select", "Snaps", "Tools", "Reports", "Actions", "Commands", "Parts Database", "Settings", "View", "Window", "Help"].map(
              (m) => html`<a href="#">${m}</a>`,
            )}
          </nav>
          <button aria-label="Minimize document"><svg width="8" height="8"><path d="M0 7H7" stroke="#a8b0bd" stroke-width="2" /></svg></button>
          <button aria-label="Restore document"><svg width="9" height="8" fill="none" stroke="#a8b0bd"><path d="M.5 3.500H6.500V7.500H.5ZM2.500 3V1H8.500V5.500H7" /></svg></button>
          <button aria-label="Close document"><svg width="8" height="8"><path d="M0 0L8 8M8 0L0 8" stroke="#a8b0bd" stroke-width="2" /></svg></button>
        </div>

        <div class="row">
          <tool-bar>
            ${this.ib("new")}${this.ib("open")}${this.ib("save")}
            <button class="tb">Load Toolbar State...</button>
            ${sep}${this.ib("cut")}${this.ib("copy")}${this.ib("paste")}${sep}
            ${this.ib("undo")}${drop("#555")}${this.ib("redo")}${drop("#888")}
            ${sep}${this.ib("print")}${sep}${this.ib("help")}${this.ib("win")}
          </tool-bar>
          <tool-bar>
            ${this.combo("maker", "Manufacturer", "FIRE-LITE")}
            ${this.combo("kind", "Category", "<ALL>")}
            ${this.combo("part", "Part", "MS-9200UDLS - FACP, 198 POINT, 4 NACS")}
          </tool-bar>
        </div>

        <div class="row">
          <tool-bar tall>
            ${this.cmd("edit", "Edit Circuits")}${this.cmd("connect", "Connect", "Appliances")}
            ${this.cmd("disconnect", "Disconnect", "Appliances")}
            <span class="sep tall"></span>
            ${this.cmd("plug", "Circuit Auto", "Connect", true)}
            <div class="branch">
              ${this.combo("", "AutoBranch", "AutoBranch: NONE")}
              <output>AutoBranch: NONE</output>
            </div>
          </tool-bar>
          <tool-bar tall>
            ${this.cmd("profile", "Parts Profile")}${this.cmd("panel", "Panel")}${this.cmd("initiator", "Initiator")}
            ${this.cmd("horn", "Notification", "Appliance")}${this.cmd("module", "Module")}
            ${this.cmd("accessory", "Accessory", "Device")}${this.cmd("phone", "Comm", "Phone")}
            ${this.cmd("relay", "Relay Device")}${this.cmd("power", "Power", "Supply")}${this.cmd("aux", "Aux Panel")}
            ${this.cmd("eol", "EOL Device")}${this.cmd("wirepath", "Wire Path")}${this.cmd("wplabel", "Wire Path", "Label")}
            ${this.cmd("junction", "Junction Box")}${this.cmd("ohm", "Ohm Meter")}${this.cmd("zone", "Zone")}
            ${this.cmd("riser", "Riser Detail")}${this.cmd("reports", "Reports")}${this.cmd("props", "Properties...")}
          </tool-bar>
        </div>

        <div class="main">
          <div class="left">
            <tool-bar vertical>
              <button class="ib vb big">A</button>
              <button class="ib vb"><span class="abc">ABC<br />ABC</span></button>
              ${["leader", "dim", "dims", "erase"].map((n) => this.vb(n))}
            </tool-bar>
            <tool-bar vertical>
              ${["line", "angle", "rect", "arc", "circle", "spline", "dbl", "dblCorner", "dblRect", "ball", "gap", "wall", "boxX", "boxIn", "grid"].map(
                (n) => this.vb(n),
              )}
            </tool-bar>
          </div>

          <div class="center">
            <div class="work">
              <layers-panel></layers-panel>
              <div class="docs">
                <div class="doctabs">
                  <a href="#">Start Page</a><a href="#">Drawing1</a>
                  <span>AlarmCAD Battery Calc - Smoke Test File.cad
                    <svg width="7" height="7"><path d="M0 0L7 7M7 0L0 7" stroke="#555" /></svg>
                  </span>
                  <div>
                    <svg width="6" height="9"><path d="M5.500 .5V8.500L.5 4.500Z" fill="none" stroke="#3e3e3e" /></svg>
                    <svg width="6" height="9"><path d="M.5 .5V8.500L5.500 4.500Z" fill="none" stroke="#3e3e3e" /></svg>
                  </div>
                </div>
                <div class="frame">
                  <div class="view">
                    <div class="canvas">
                      <div class="sheetframe"></div>
                      <circuit-report class="slc" .report=${SLC}></circuit-report>
                      <circuit-report class="nac" .report=${NAC}></circuit-report>
                      <div class="handle"></div>
                      <svg class="ucs" width="124" height="124" fill="none">
                        <path d="M12.500 100V40.500H2.500L22.500 .5L42.500 40.500H32.500V91" stroke="#4f9455" />
                        <path d="M32 90.500H82.500V80.500L122.500 100.500L82.500 120.500V110.500H22" stroke="#94545c" />
                        <circle cx="22" cy="101" r="9.500" fill="#fff" stroke="#777" />
                        <path d="M22 101V91A10 10 0 0 0 12 101ZM22 101H32A10 10 0 0 1 22 111Z" fill="#000" />
                        <path d="M2 100.500H22" stroke="#33339a" />
                      </svg>
                      <button class="badge" aria-label="Orbit">${icon("compass")}</button>
                    </div>
                    <div class="vthumb"></div>
                    <div class="hthumb"></div>
                  </div>
                  <div class="sheets">
                    <button aria-label="First sheet"><svg width="8" height="8"><path d="M1.500 0V8" stroke="#555" /><path d="M7 0V8L3 4Z" fill="#555" /></svg></button>
                    <button aria-label="Previous sheet"><svg width="8" height="8"><path d="M6 0V8L2 4Z" fill="#555" /></svg></button>
                    <button aria-label="Next sheet"><svg width="8" height="8"><path d="M2 0V8L6 4Z" fill="#555" /></svg></button>
                    <button aria-label="Last sheet"><svg width="8" height="8"><path d="M6.500 0V8" stroke="#555" /><path d="M1 0V8L5 4Z" fill="#555" /></svg></button>
                    <a href="#" class="cur">*Model</a><a href="#">Sheet 1</a>
                  </div>
                </div>
              </div>
            </div>
            <footer class="status">
              <span>Increases the camera magnification.</span>
              <span class="gap">1 selected</span><span class="gap">Elev1: 0'-0</span><span>Text table</span>
              <span># Off</span><span>Foot</span>
            </footer>
          </div>

          <div class="right">
            <tool-bar vertical>
              ${["Crossing Window", "Like Selected", "Select Last", "Notifier in Rect", "Initiator in Rect", "Wire Path in Rect", "WP Label in Rect", "Alarm Sys Comp in Rect"].map(
                (t, i) => html`${i ? html`<i></i>` : nothing}<button>${t}</button>`,
              )}
            </tool-bar>
          </div>
        </div>

        <div class="row">
          <tool-bar>
            ${this.ib("calc")}${this.ib("arrowR")}
            <input class="num" aria-label="Value" />
          </tool-bar>
          <tool-bar>
            ${this.ib("datum")}${this.ib("zzero")}${this.ib("ruler")}${sep}
            ${this.ib("snapAng")}${this.ib("snapCen", true)}${this.ib("snapEnd", true)}
            ${["snapPar", "snapInt", "snapNear", "snapTan", "snapQuad"].map((n) => this.ib(n))}
            ${sep}${this.ib("polysnap")}${this.ib("magnet", true)}
          </tool-bar>
          <tool-bar>
            ${this.ib("iso")}${this.ib("plan", true)}${this.ib("fit")}${this.ib("zoomWin")}
            <button class="tb on">Lock On Target</button>
            ${this.ib("zoomIn", true)}
            ${["zoomOut", "clip", "prev", "next", "camera", "sheet", "viewBox", "rotate", "flash", "norms"].map((n) => this.ib(n))}
          </tool-bar>
          <tool-bar>
            <input class="num turn" aria-label="Rotation angle" value="90" />
            ${sep}${this.axis("rotL", "+Z")}${this.axis("rotR", "-Z")}
            ${sep}${this.axis("up", "+X")}${this.axis("down", "-X")}
            ${sep}${this.axis("left", "-Y")}${this.axis("right", "+Y")}
          </tool-bar>
        </div>
      </div>
    `;
  }
}
